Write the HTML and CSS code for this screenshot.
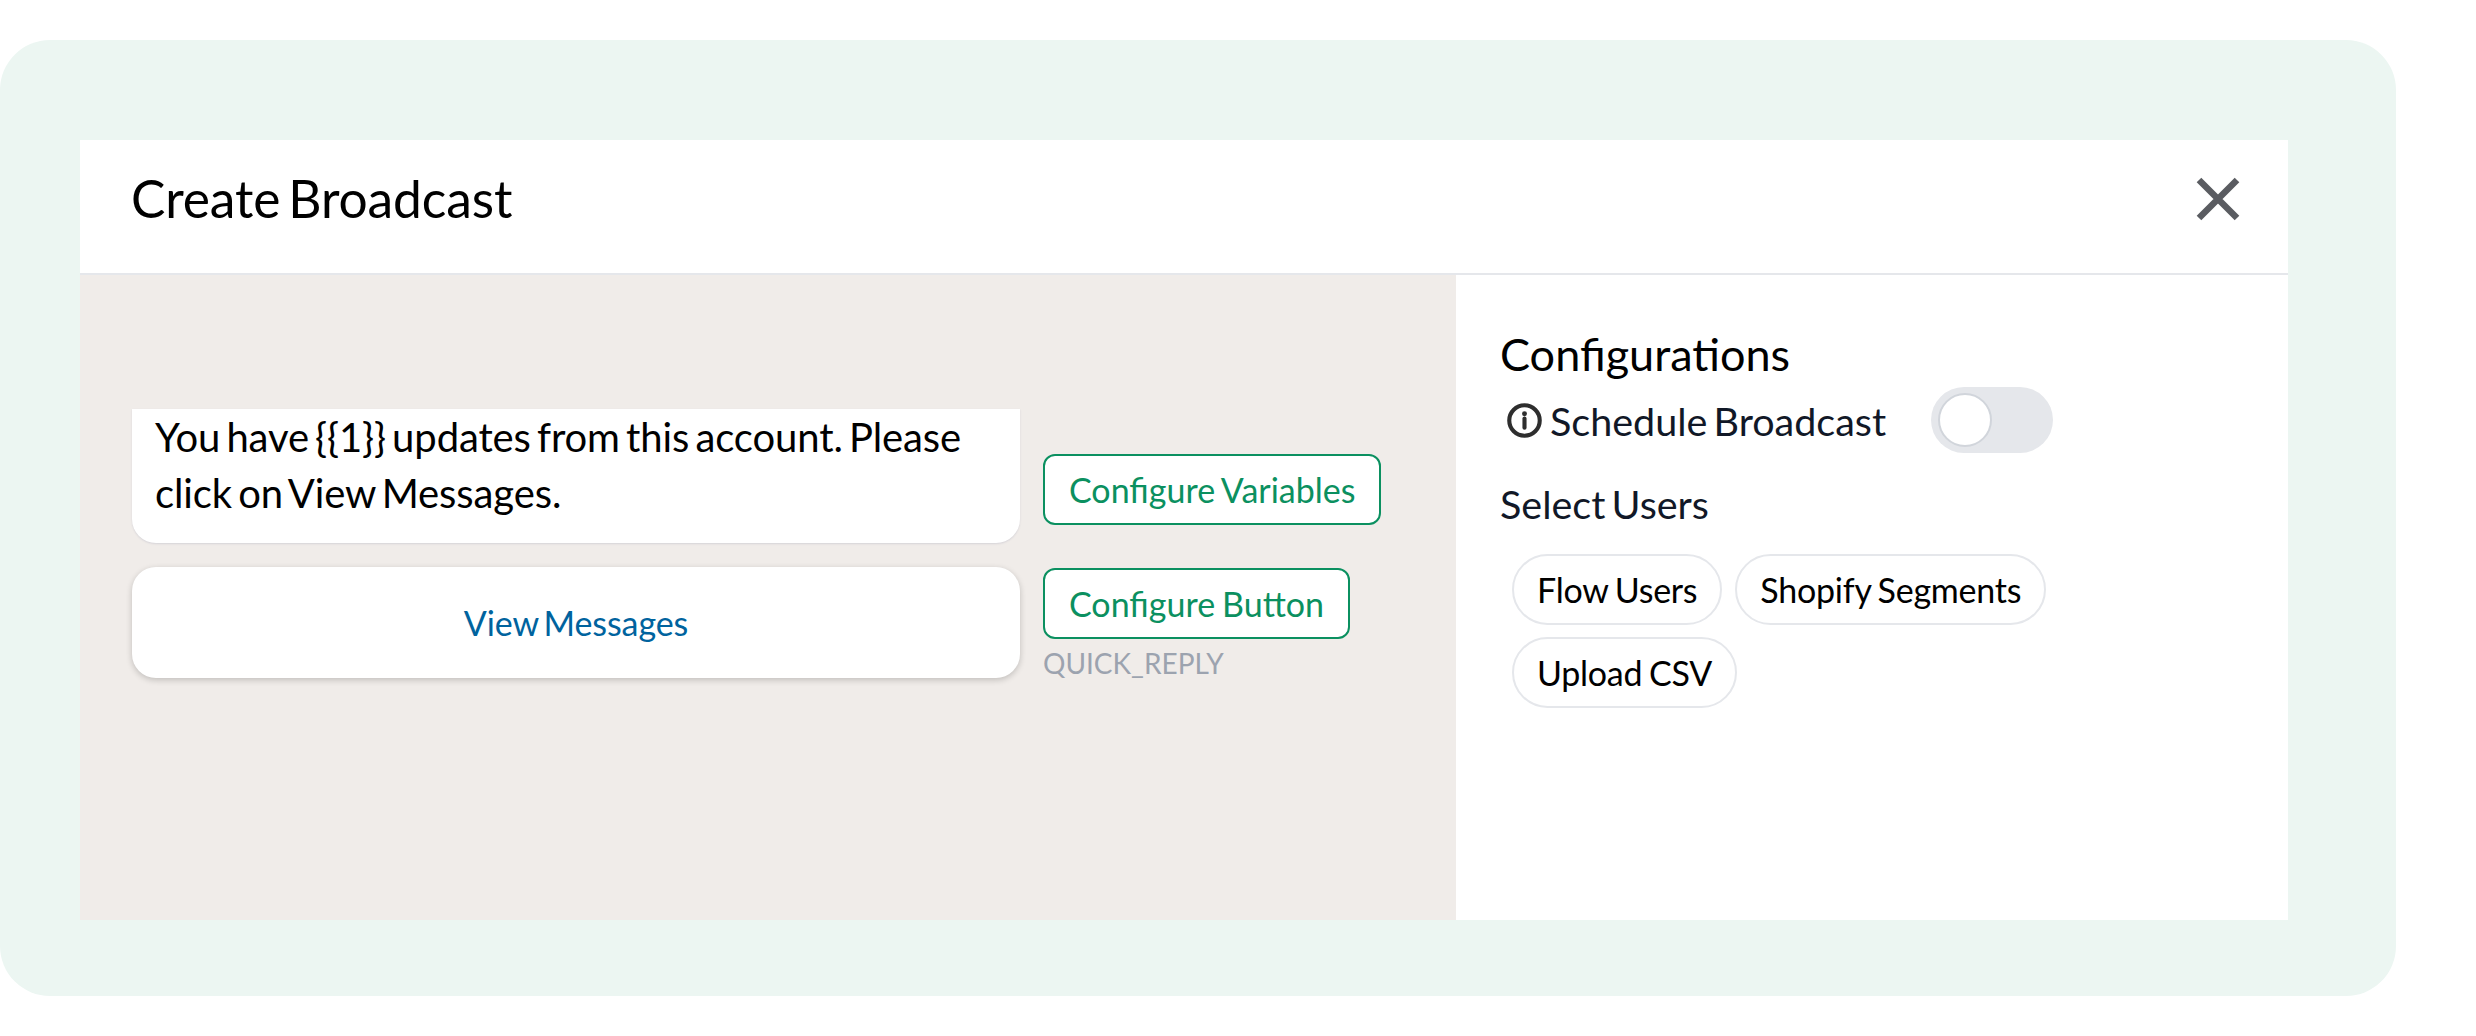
FILE: index.html
```html
<!DOCTYPE html>
<html lang="en">
<head>
<meta charset="utf-8">
<title>Create Broadcast</title>
<link rel="stylesheet" href="styles.css">
</head>
<body>
<main class="panel">
  <section class="modal">
    <header class="modal-header">
      <h1 class="title">Create Broadcast</h1>
      <svg class="close" viewBox="0 0 44 44" aria-label="Close"><path d="M3 3 41 41M41 3 3 41"/></svg>
    </header>
    <div class="modal-body">
      <div class="preview">
        <div class="row">
          <div class="bubble">You have {{1}} updates from this account. Please click on View Messages.</div>
          <button class="config config-vars">Configure Variables</button>
        </div>
        <div class="row">
          <div class="bubble-button">View Messages</div>
          <div class="config-col">
            <button class="config">Configure Button</button>
            <span class="caption">QUICK_REPLY</span>
          </div>
        </div>
      </div>
      <aside class="settings">
        <h2 class="settings-title">Configurations</h2>
        <div class="schedule">
          <svg class="info" viewBox="0 0 34 34" aria-hidden="true">
            <circle cx="17" cy="17" r="14.8" fill="none" stroke="#2e2e2e" stroke-width="4"/>
            <circle cx="17" cy="10.5" r="2.4" fill="#2e2e2e"/>
            <path d="M17 15v9" fill="none" stroke="#2e2e2e" stroke-width="4" stroke-linecap="round"/>
          </svg>
          <span class="schedule-label">Schedule Broadcast</span>
          <span class="toggle"><span class="knob"></span></span>
        </div>
        <h3 class="users-title">Select Users</h3>
        <div class="chips">
          <span class="chip">Flow Users</span>
          <span class="chip">Shopify Segments</span>
          <span class="chip">Upload CSV</span>
        </div>
      </aside>
    </div>
  </section>
</main>
</body>
</html>
```
FILE: styles.css
```css
* { box-sizing: border-box; word-spacing: -0.1em; }
html, body { margin: 0; padding: 0; background: #fff; }
body { font-family: Lato, "Liberation Sans", sans-serif; color: #000; }

.panel {
  width: 2396px;
  height: 956px;
  margin-top: 40px;
  padding: 100px 108px 76px 80px;
  background: #ecf6f2;
  border-radius: 50px;
}
.modal { display: flex; flex-direction: column; height: 780px; background: #fff; }
.modal-header {
  display: flex;
  align-items: center;
  justify-content: space-between;
  height: 135px;
  padding: 0 48px 16px 51px;
  border-bottom: 2px solid #e5e7eb;
}
.title { margin: 0; font-size: 51.5px; font-weight: 400; line-height: 1; letter-spacing: -0.1px; }
.close { width: 44px; height: 44px; }
.close path { fill: none; stroke: #5a5c61; stroke-width: 6.5; }

.modal-body { display: flex; flex: 1; }
.preview {
  display: flex;
  flex-direction: column;
  gap: 24px;
  width: 1376px;
  padding: 134px 0 0 52px;
  background: #f0ece9;
}
.row { display: flex; gap: 23px; align-items: flex-start; }
.bubble {
  width: 888px;
  height: 134px;
  padding: 0 23px;
  font-size: 40px;
  line-height: 56px;
  letter-spacing: -0.1px;
  background: #fff;
  border-radius: 0 0 24px 24px;
  box-shadow: 0 1px 2px rgba(80, 90, 130, .16);
}
.bubble-button {
  display: flex;
  align-items: center;
  justify-content: center;
  width: 888px;
  height: 111px;
  font-size: 34px;
  letter-spacing: -0.1px;
  color: #00639e;
  background: #fff;
  border-radius: 24px;
  box-shadow: 0 2px 6px rgba(0, 0, 0, .2);
}
.config {
  display: block;
  height: 71px;
  padding: 0 24px 1px;
  font: 400 34px Lato, "Liberation Sans", sans-serif;
  word-spacing: -0.05em;
  color: #0b9060;
  background: #fff;
  border: 2px solid #0b9060;
  border-radius: 12px;
}
.config-vars { margin-top: 45px; }
.config-col { display: flex; flex-direction: column; align-items: flex-start; padding-top: 1px; }
.caption { margin-top: 6px; font-size: 28px; line-height: 36px; color: #9ca3af; }

.settings { flex: 1; padding: 51px 0 0 44px; }
.settings-title { margin: 0; font-size: 45px; font-weight: 400; line-height: 56px; }
.schedule { display: flex; align-items: center; height: 66px; margin-top: 5px; padding-left: 7px; }
.info { width: 35px; height: 35px; }
.schedule-label { margin-left: 8px; font-size: 39.5px; color: #111827; }
.toggle {
  display: block;
  width: 122px;
  height: 66px;
  margin-left: 45px;
  padding: 6px 0 0 7px;
  background: #e5e7eb;
  border-radius: 33px;
}
.knob {
  display: block;
  width: 54px;
  height: 54px;
  background: #fff;
  border: 2px solid #d1d5db;
  border-radius: 50%;
}
.users-title { margin: 23px 0 0; font-size: 39.5px; font-weight: 400; line-height: 56px; color: #111827; }
.chips { display: flex; flex-wrap: wrap; gap: 12px 13px; margin-top: 22px; padding-left: 12px; width: 560px; }
.chip {
  display: flex;
  align-items: center;
  height: 71px;
  padding: 0 23px;
  font-size: 34px;
  word-spacing: -0.05em;
  letter-spacing: -0.25px;
  background: #fff;
  border: 2px solid #e5e7eb;
  border-radius: 36px;
}
```
